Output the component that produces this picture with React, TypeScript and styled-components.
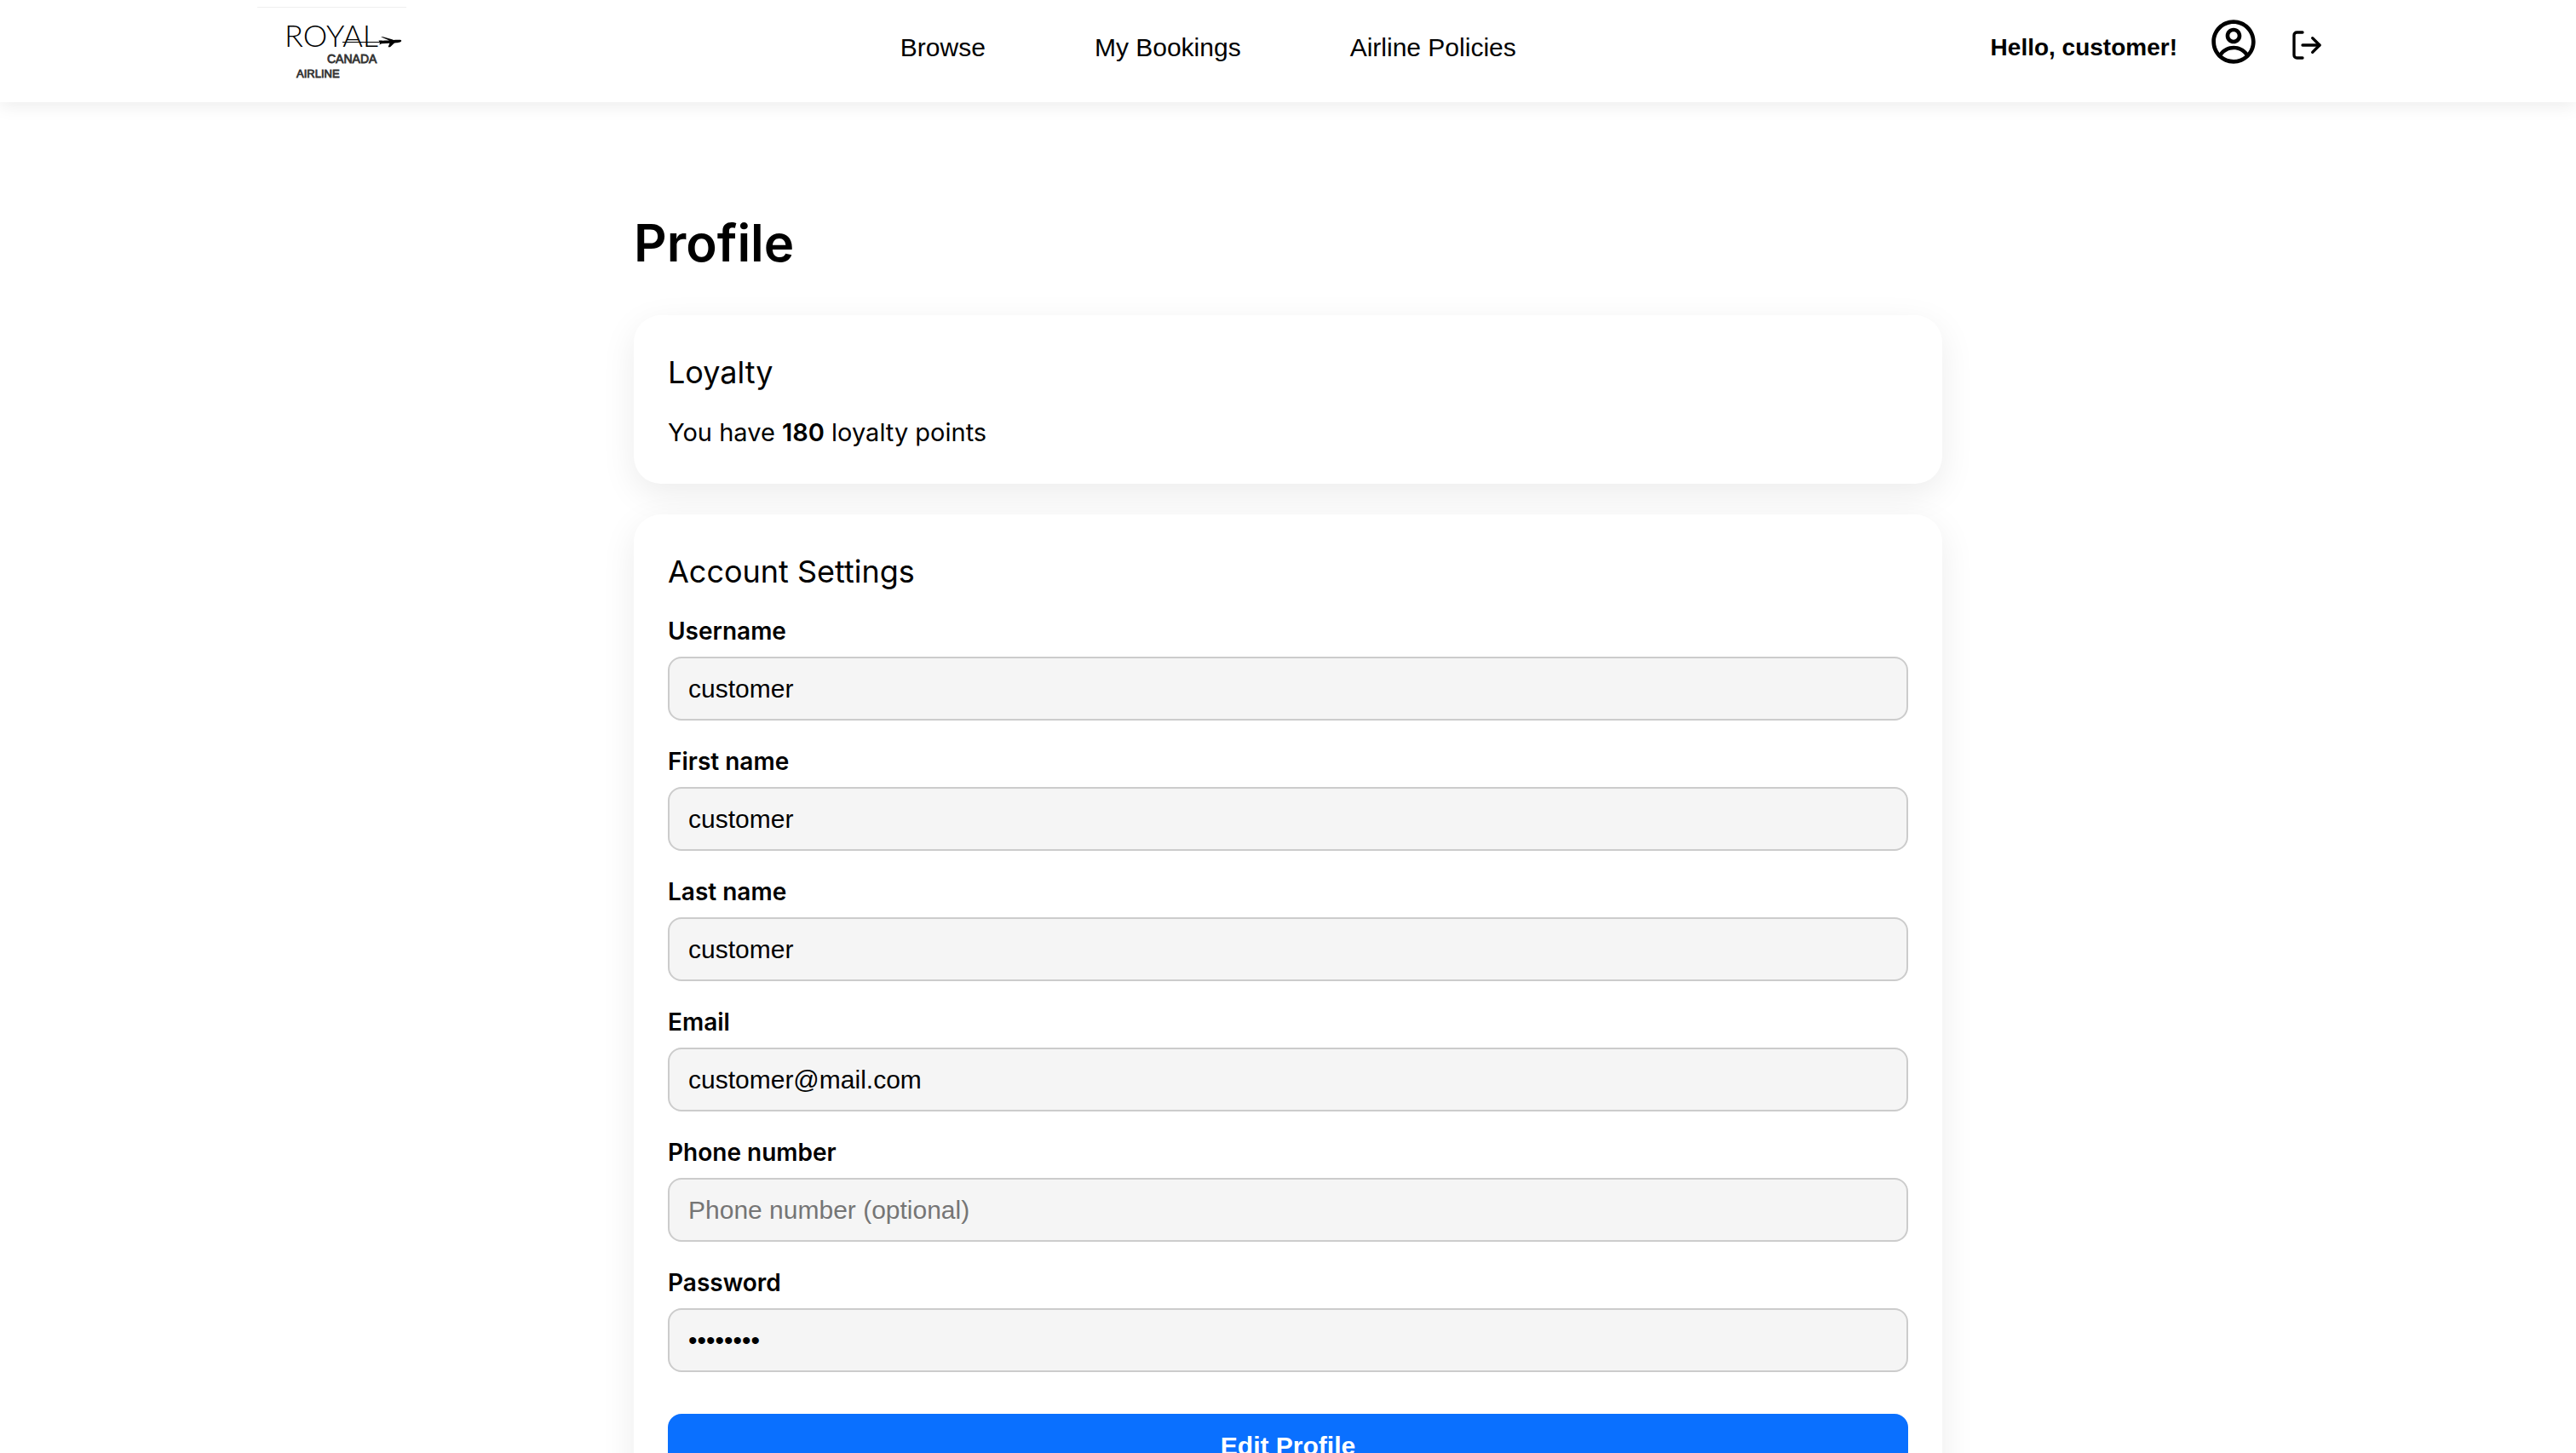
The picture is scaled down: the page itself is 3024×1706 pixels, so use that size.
import React, { useId } from "react";
import styled, { createGlobalStyle } from "styled-components";
import { CgProfile } from "react-icons/cg";
import { FiLogOut } from "react-icons/fi";

const sans = `"Liberation Sans", Arial, sans-serif`;
const system = `Inter, "Liberation Sans", sans-serif`;

const GlobalStyle = createGlobalStyle`
  *, *::before, *::after { box-sizing: border-box; }
  html { scrollbar-width: none; }
  body { margin: 0; background: #fff; color: #000; font-family: ${system}; font-size: 30px; }
`;

const Header = styled.header`
  position: relative;
  padding: 0 40px 8px;
  background: #fff;
  box-shadow: 0 4px 20px rgba(0, 0, 0, 0.08);
`;

const HeaderInner = styled.div`
  display: flex;
  align-items: center;
  justify-content: space-between;
  max-width: 2432px;
  margin: 0 auto;
`;

const LogoLink = styled.a`
  display: block;
  width: 204px;
  height: 112px;
  color: #000;
`;

const Nav = styled.nav`
  display: flex;
  gap: 128px;
`;

const NavLink = styled.a`
  font-family: ${sans};
  font-size: 30px;
  line-height: 36px;
  color: #000;
  text-decoration: none;
`;

const Actions = styled.div`
  display: flex;
  align-items: center;
  gap: 38px;
`;

const Greeting = styled.span`
  font-family: ${sans};
  font-size: 28px;
  line-height: 36px;
  font-weight: 700;
`;

const IconButton = styled.button<{ $size: number; $lift: number }>`
  display: block;
  padding: 0 0 ${(p) => p.$lift}px;
  border: 0;
  background: none;
  color: #000;
  cursor: pointer;

  svg {
    display: block;
    width: ${(p) => p.$size}px;
    height: ${(p) => p.$size}px;
  }
`;

const Main = styled.main`
  max-width: 1536px;
  margin: 0 auto;
  padding: 126px 0 80px;
`;

const Title = styled.h1`
  margin: 0 0 46px;
  font-size: 60px;
  line-height: 78px;
  font-weight: 600;
`;

const Card = styled.section`
  margin-bottom: 36px;
  padding: 40px;
  border-radius: 32px;
  background: #fff;
  box-shadow: 0 12px 40px rgba(0, 0, 0, 0.08);
`;

const CardTitle = styled.h2`
  margin: 0 0 24px;
  font-size: 36px;
  line-height: 54px;
  font-weight: 400;
`;

const Points = styled.p`
  margin: 0;
  font-size: 29px;
  line-height: 40px;

  strong { font-weight: 600; }
`;

const Form = styled.form`
  display: flex;
  flex-direction: column;
  gap: 29px;
`;

const FieldBox = styled.div`
  display: flex;
  flex-direction: column;
  gap: 10px;
`;

const Label = styled.label`
  font-size: 28px;
  line-height: 39px;
  font-weight: 600;
`;

const Input = styled.input`
  width: 100%;
  height: 75px;
  padding: 0 22px;
  border: 2px solid #ccc;
  border-radius: 16px;
  background: #f5f5f5;
  color: #000;
  font-family: ${sans};
  font-size: 30px;
  outline: none;

  &::placeholder { color: #757575; }
`;

const SubmitButton = styled.button`
  margin-top: 20px;
  padding: 20px;
  border: 0;
  border-radius: 16px;
  background: #0a70ff;
  color: #fff;
  font-family: ${sans};
  font-size: 30px;
  line-height: 35px;
  font-weight: 700;
  cursor: pointer;
`;

function Logo() {
  return (
    <svg viewBox="0 0 204 112" width="204" height="112" role="img" aria-label="Royal Canada Airline">
      <path d="M6 8.5H181" stroke="#eee" />
      <text x="38" y="55" fontFamily="Liberation Sans Narrow, Lato, sans-serif" fontWeight="300" fontSize="36">ROYAL</text>
      <path d="M106 49.5H158" stroke="#000" strokeWidth="1.2" />
      <path
        d="M150 47.6C158 48 162 47 171 46.8C174 46.4 176 47 175 48.4C174 49.8 169 50.3 167 50.4L162 55.2H159.6L161.4 50.8L152 51.2L149.4 52.6L150 49.8L148.4 47.4ZM161 47.4L151 43.2H153.6L166 46.8Z"
        fill="#000"
      />
      <g fontFamily="Liberation Sans, sans-serif" fill="#333" stroke="#333" strokeWidth="0.8">
        <text x="88" y="74" fontSize="14">CANADA</text>
        <text x="52" y="91" fontSize="13">AIRLINE</text>
      </g>
    </svg>
  );
}

type FieldProps = { label: string; type?: string; value?: string; placeholder?: string };

function Field({ label, type = "text", value = "", placeholder }: FieldProps) {
  const id = useId();
  return (
    <FieldBox>
      <Label htmlFor={id}>{label}</Label>
      <Input id={id} type={type} value={value} placeholder={placeholder} readOnly />
    </FieldBox>
  );
}

export default function App() {
  return (
    <>
      <GlobalStyle />
      <Header>
        <HeaderInner>
          <LogoLink href="#home">
            <Logo />
          </LogoLink>
          <Nav>
            <NavLink href="#browse">Browse</NavLink>
            <NavLink href="#bookings">My Bookings</NavLink>
            <NavLink href="#policies">Airline Policies</NavLink>
          </Nav>
          <Actions>
            <Greeting>Hello, customer!</Greeting>
            <IconButton type="button" aria-label="Profile" $size={56} $lift={14}>
              <CgProfile />
            </IconButton>
            <IconButton type="button" aria-label="Log out" $size={40} $lift={6}>
              <FiLogOut />
            </IconButton>
          </Actions>
        </HeaderInner>
      </Header>
      <Main>
        <Title>Profile</Title>
        <Card>
          <CardTitle>Loyalty</CardTitle>
          <Points>
            You have <strong>180</strong> loyalty points
          </Points>
        </Card>
        <Card>
          <CardTitle>Account Settings</CardTitle>
          <Form onSubmit={(e: React.FormEvent) => e.preventDefault()}>
            <Field label="Username" value="customer" />
            <Field label="First name" value="customer" />
            <Field label="Last name" value="customer" />
            <Field label="Email" type="email" value="customer@mail.com" />
            <Field label="Phone number" type="tel" placeholder="Phone number (optional)" />
            <Field label="Password" type="password" value="password" />
            <SubmitButton type="submit">Edit Profile</SubmitButton>
          </Form>
        </Card>
      </Main>
    </>
  );
}
